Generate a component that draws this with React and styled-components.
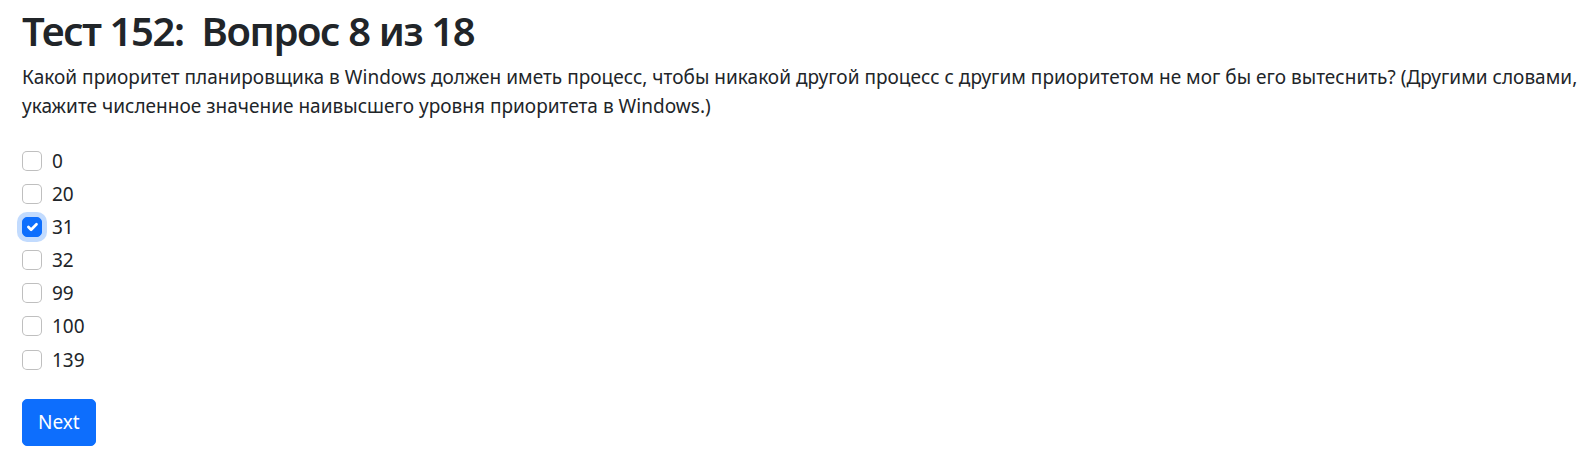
import React, { useState } from "react";
import styled, { createGlobalStyle } from "styled-components";

const GlobalStyle = createGlobalStyle`
  body {
    margin: 0;
    background: #fff;
    color: #212529;
    font-family: "Noto Sans", "Open Sans", sans-serif;
  }
`;

const Page = styled.div`
  padding: 7px 4px 0 22px;
`;

const Title = styled.h1`
  margin: 0 0 8px;
  font-size: 40px;
  font-weight: 600;
  line-height: 1.2;
  letter-spacing: -1.4px;
  white-space: pre;
`;

const Question = styled.p`
  margin: 0 0 26px;
  font-size: 19px;
  line-height: 28.5px;
  letter-spacing: 0.02px;
`;

const Options = styled.div`
  display: flex;
  flex-direction: column;
  gap: 3.1px;
`;

const OptionRow = styled.label`
  display: flex;
  align-items: center;
  height: 30px;
  gap: 10px;
  font-size: 19px;
  cursor: pointer;
`;

const Box = styled.span`
  flex: none;
  width: 20px;
  height: 20px;
  box-sizing: border-box;
  border-radius: 5px;
  border: 1px solid ${(p) => (p.$checked ? "#0d6efd" : "rgba(0,0,0,.25)")};
  background: ${(p) => (p.$checked ? "#0d6efd" : "#fff")};
  box-shadow: ${(p) => (p.$checked ? "0 0 0 5px rgba(13,110,253,.25)" : "none")};
  display: flex;
  align-items: center;
  justify-content: center;
`;

const NextButton = styled.button`
  margin-top: 24px;
  height: 47px;
  padding: 0 15px;
  border: 1px solid #0d6efd;
  border-radius: 5px;
  background: #0d6efd;
  color: #fff;
  font-family: inherit;
  font-size: 19px;
  cursor: pointer;
`;

const answers = ["0", "20", "31", "32", "99", "100", "139"];

function Check() {
  return (
    <svg width="20" height="20" viewBox="0 0 20 20">
      <path
        d="m6 10 3 3 6-6"
        fill="none"
        stroke="#fff"
        strokeWidth="3"
        strokeLinecap="round"
        strokeLinejoin="round"
      />
    </svg>
  );
}

export default function App() {
  const [picked, setPicked] = useState(["31"]);
  const toggle = (a) =>
    setPicked(picked.includes(a) ? picked.filter((x) => x !== a) : [...picked, a]);

  return (
    <Page>
      <GlobalStyle />
      <Title>Тест 152:  Вопрос 8 из 18</Title>
      <Question>
        Какой приоритет планировщика в Windows должен иметь процесс, чтобы никакой другой
        процесс с другим приоритетом не мог бы его вытеснить? (Другими словами, укажите
        численное значение наивысшего уровня приоритета в Windows.)
      </Question>
      <Options>
        {answers.map((a) => (
          <OptionRow key={a} onClick={() => toggle(a)}>
            <Box $checked={picked.includes(a)}>{picked.includes(a) && <Check />}</Box>
            {a}
          </OptionRow>
        ))}
      </Options>
      <NextButton>Next</NextButton>
    </Page>
  );
}
